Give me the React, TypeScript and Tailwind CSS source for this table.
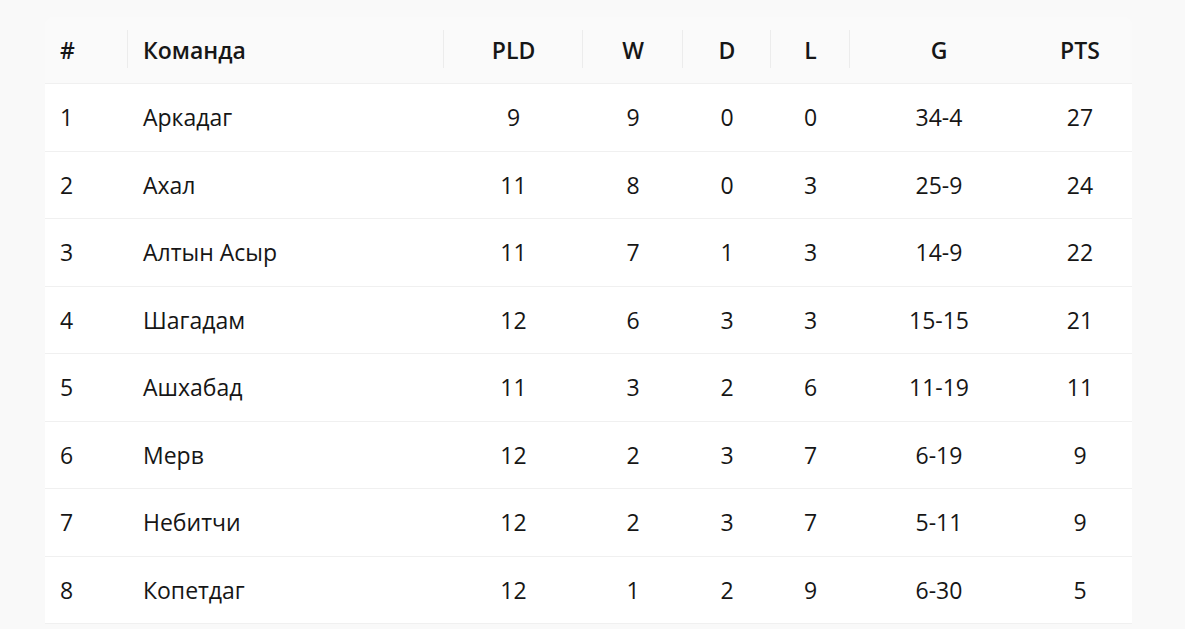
import React from "react";

const rows = [
  { pos: 1, team: "Аркадаг", pld: 9, w: 9, d: 0, l: 0, g: "34-4", pts: 27 },
  { pos: 2, team: "Ахал", pld: 11, w: 8, d: 0, l: 3, g: "25-9", pts: 24 },
  { pos: 3, team: "Алтын Асыр", pld: 11, w: 7, d: 1, l: 3, g: "14-9", pts: 22 },
  { pos: 4, team: "Шагадам", pld: 12, w: 6, d: 3, l: 3, g: "15-15", pts: 21 },
  { pos: 5, team: "Ашхабад", pld: 11, w: 3, d: 2, l: 6, g: "11-19", pts: 11 },
  { pos: 6, team: "Мерв", pld: 12, w: 2, d: 3, l: 7, g: "6-19", pts: 9 },
  { pos: 7, team: "Небитчи", pld: 12, w: 2, d: 3, l: 7, g: "5-11", pts: 9 },
  { pos: 8, team: "Копетдаг", pld: 12, w: 1, d: 2, l: 9, g: "6-30", pts: 5 },
];

const cols = "grid grid-cols-[83px_316px_139px_100px_88px_79px_178px_104px]";

const HeadCell = ({ children, left, sep }: { children: React.ReactNode; left?: boolean; sep?: boolean }) => (
  <div className={"relative flex items-center h-full " + (left ? "pl-[15px]" : "justify-center")}>
    {children}
    {sep && <span className="absolute right-0 top-[13px] h-[38px] w-px bg-[#ececec]" />}
  </div>
);

export default function App() {
  return (
    <div
      className="min-h-screen bg-[#f9f9f9] pt-[17px] pl-[45px] text-[#161616] text-[23px]"
      style={{ fontFamily: '"Open Sans", "Noto Sans", sans-serif' }}
    >
      <div className="w-[1087px]">
        <div className={cols + " h-[67px] bg-[#fafafa] rounded-t-[8px] border-b border-[#f0f0f0] font-semibold"}>
          <HeadCell left sep>#</HeadCell>
          <HeadCell left sep>Команда</HeadCell>
          <HeadCell sep>PLD</HeadCell>
          <HeadCell sep>W</HeadCell>
          <HeadCell sep>D</HeadCell>
          <HeadCell sep>L</HeadCell>
          <HeadCell>G</HeadCell>
          <HeadCell>PTS</HeadCell>
        </div>
        {rows.map(r => (
          <div key={r.pos} className={cols + " h-[67.5px] bg-white border-b border-[#f0f0f0] items-center"}>
            <div className="pl-[15px]">{r.pos}</div>
            <div className="pl-[15px]">{r.team}</div>
            <div className="text-center">{r.pld}</div>
            <div className="text-center">{r.w}</div>
            <div className="text-center">{r.d}</div>
            <div className="text-center">{r.l}</div>
            <div className="text-center">{r.g}</div>
            <div className="text-center">{r.pts}</div>
          </div>
        ))}
      </div>
    </div>
  );
}
